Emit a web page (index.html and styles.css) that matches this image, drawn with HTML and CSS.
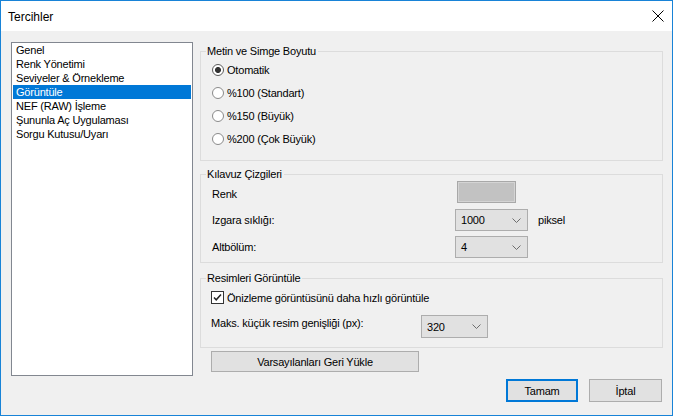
FILE: index.html
```html
<!DOCTYPE html>
<html>
<head>
<meta charset="utf-8">
<link rel="stylesheet" href="styles.css">
</head>
<body>
<div class="window">
  <div class="titlebar">
    <span class="title">Tercihler</span>
    <svg class="close" width="12" height="12" viewBox="0 0 12 12"><path d="M0.5 0.5 L11.5 11.5 M11.5 0.5 L0.5 11.5" stroke="#000" stroke-width="1" fill="none"/></svg>
  </div>
  <div class="content">
    <ul class="list">
      <li>Genel</li>
      <li>Renk Yönetimi</li>
      <li>Seviyeler &amp; Örnekleme</li>
      <li class="selected">Görüntüle</li>
      <li>NEF (RAW) İşleme</li>
      <li>Şununla Aç Uygulaması</li>
      <li>Sorgu Kutusu/Uyarı</li>
    </ul>
    <div class="right">
      <div class="group g1">
        <span class="legend">Metin ve Simge Boyutu</span>
        <div class="radio-row"><span class="radio checked"></span><span>Otomatik</span></div>
        <div class="radio-row"><span class="radio"></span><span>%100 (Standart)</span></div>
        <div class="radio-row"><span class="radio"></span><span>%150 (Büyük)</span></div>
        <div class="radio-row"><span class="radio"></span><span>%200 (Çok Büyük)</span></div>
      </div>
      <div class="group g2">
        <span class="legend">Kılavuz Çizgileri</span>
        <div class="grid2">
          <span class="lbl r1">Renk</span>
          <span class="swatch"></span>
          <span></span>
          <span class="lbl">Izgara sıklığı:</span>
          <div class="combo w73"><span>1000</span><svg width="9" height="5" viewBox="0 0 9 5"><path d="M0.5 0.5 L4.5 4.5 L8.5 0.5" stroke="#6d6d6d" fill="none"/></svg></div>
          <span class="lbl unit">piksel</span>
          <span class="lbl">Altbölüm:</span>
          <div class="combo w73"><span>4</span><svg width="9" height="5" viewBox="0 0 9 5"><path d="M0.5 0.5 L4.5 4.5 L8.5 0.5" stroke="#6d6d6d" fill="none"/></svg></div>
          <span></span>
        </div>
      </div>
      <div class="group g3">
        <span class="legend">Resimleri Görüntüle</span>
        <div class="check-row">
          <span class="checkbox"><svg width="11" height="11" viewBox="0 0 11 11"><path d="M2 5.5 L4.2 7.8 L9 2.5" stroke="#222" stroke-width="1.5" fill="none"/></svg></span>
          <span>Önizleme görüntüsünü daha hızlı görüntüle</span>
        </div>
        <div class="width-row">
          <span class="lbl wlabel">Maks. küçük resim genişliği (px):</span>
          <div class="combo w67"><span>320</span><svg width="9" height="5" viewBox="0 0 9 5"><path d="M0.5 0.5 L4.5 4.5 L8.5 0.5" stroke="#6d6d6d" fill="none"/></svg></div>
        </div>
      </div>
      <div class="btn restore">Varsayılanları Geri Yükle</div>
      <div class="actions">
        <div class="btn ok">Tamam</div>
        <div class="btn cancel">İptal</div>
      </div>
    </div>
  </div>
</div>
</body>
</html>
```
FILE: styles.css
```css
html, body {
  margin: 0;
  padding: 0;
  background: #ffffff;
}
body {
  font-family: "Liberation Sans", Arial, sans-serif;
  font-size: 11px;
  letter-spacing: -0.2px;
  color: #000;
}
.window {
  width: 673px;
  height: 416px;
  box-sizing: border-box;
  border: 1px solid #1883d7;
  background: #f0f0f0;
  display: flex;
  flex-direction: column;
}
.titlebar {
  height: 30px;
  background: #ffffff;
  display: flex;
  align-items: center;
  justify-content: space-between;
  padding: 0 8px 0 7px;
  flex: none;
}
.title {
  font-size: 12px;
  letter-spacing: 0;
  padding-top: 1px;
}
.close {
  display: block;
}
.content {
  display: flex;
  flex-direction: row;
  align-items: flex-start;
}
.list {
  list-style: none;
  margin: 11px 0 0 10px;
  padding: 0 1px;
  width: 182px;
  height: 334px;
  box-sizing: border-box;
  border: 1px solid #828790;
  background: #fff;
}
.list li {
  height: 14px;
  line-height: 14px;
  padding-left: 3px;
  white-space: nowrap;
}
.list li.selected {
  background: #0078d7;
  color: #fff;
}
.right {
  width: 463px;
  margin: 20px 0 0 7px;
  display: flex;
  flex-direction: column;
}
.group {
  position: relative;
  border: 1px solid #dcdcdc;
  box-sizing: border-box;
}
.legend {
  position: absolute;
  top: -8px;
  left: 5px;
  padding: 0 2px 0 1px;
  line-height: 14px;
  background: #f0f0f0;
}
.g1 {
  height: 110px;
  padding: 6px 0 0 10px;
}
.radio-row {
  height: 23px;
  display: flex;
  align-items: center;
}
.radio {
  width: 12px;
  height: 12px;
  box-sizing: border-box;
  border-radius: 50%;
  border: 1px solid #8a8a8a;
  background: #fff;
  margin-right: 3px;
  margin-left: 1px;
  flex: none;
}
.radio.checked {
  border-color: #5c5c5c;
  background: radial-gradient(circle, #333 0, #333 2.6px, #fff 3.4px);
}
.g2 {
  height: 89px;
  margin-top: 13px;
  padding: 6px 0 0 11px;
}
.grid2 {
  display: grid;
  grid-template-columns: 243px 73px auto;
  grid-template-rows: 24px 22px 22px;
  row-gap: 4px;
  align-items: center;
}
.grid2 > :nth-child(n+7) {
  margin-top: 2px;
}
.lbl {
  line-height: 14px;
}
.r1 {
  padding-top: 2px;
}
.unit {
  margin-left: 10px;
}
.swatch {
  align-self: start;
  width: 59px;
  height: 22px;
  box-sizing: border-box;
  margin-left: 2px;
  border: 1px solid #a8a8a8;
  background: #c2c2c2;
  box-shadow: inset 0 0 0 1px #d4d4d4;
}
.combo {
  height: 22px;
  box-sizing: border-box;
  border: 1px solid #adadad;
  background: #e1e1e1;
  display: flex;
  align-items: center;
  justify-content: space-between;
  padding: 0 6px 0 5px;
}
.combo svg {
  display: block;
}
.w73 {
  width: 73px;
}
.w67 {
  width: 67px;
  height: 23px;
}
.g3 {
  height: 70px;
  margin-top: 15px;
  padding: 7px 0 0 10px;
}
.check-row {
  height: 23px;
  display: flex;
  align-items: center;
}
.checkbox {
  width: 13px;
  height: 13px;
  box-sizing: border-box;
  border: 1px solid #333;
  background: #fff;
  margin-right: 3px;
  display: flex;
  align-items: center;
  justify-content: center;
  flex: none;
}
.checkbox svg {
  display: block;
}
.width-row {
  margin-top: 6px;
  display: flex;
  align-items: flex-start;
}
.wlabel {
  width: 210px;
  padding-top: 1px;
}
.btn {
  box-sizing: border-box;
  border: 1px solid #adadad;
  background: #e1e1e1;
  display: flex;
  align-items: center;
  justify-content: center;
}
.restore {
  width: 208px;
  height: 21px;
  margin: 3px 0 0 11px;
}
.actions {
  display: flex;
  justify-content: flex-end;
  margin: 7px 1px 0 0;
}
.ok {
  width: 72px;
  height: 23px;
  border: 2px solid #0078d7;
}
.cancel {
  width: 73px;
  height: 23px;
  margin-left: 11px;
}
```
